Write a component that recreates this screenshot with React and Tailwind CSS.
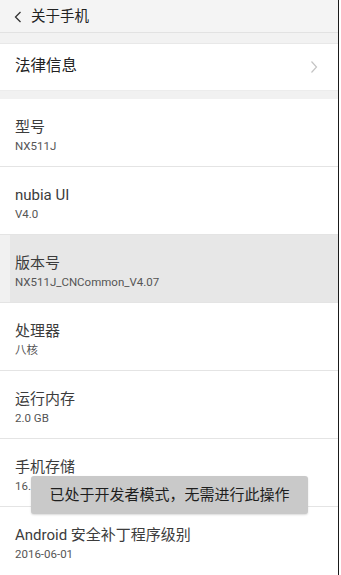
import React from "react";

const font = { fontFamily: 'Roboto, "Noto Sans CJK SC", "Noto Sans", sans-serif' };

function Row({ title, value, highlight, last }) {
  return (
    <div className={`relative h-[68.5px] ${last ? "" : "border-b border-[#e4e4e4]"} ${highlight ? "bg-[#e7e7e7]" : "bg-white"}`}>
      {highlight && <div className="absolute left-0 top-0 bottom-0 w-[10px] bg-[#f1f1f1]" />}
      <div className="relative pl-[15px] pt-[18px]">
        <div className="text-[15px] leading-[20px] text-[#3c3c3c]">{title}</div>
        <div className="mt-[2px] text-[11.5px] leading-[14px] text-[#555]">{value}</div>
      </div>
    </div>
  );
}

export default function App() {
  return (
    <div className="flex w-[341px] h-[575px] overflow-hidden bg-white" style={font}>
      <div className="relative w-[338px] h-full flex flex-col">
        <div className="h-[32px] bg-[#f4f4f4] flex items-center pl-[14px] pt-[2px]">
          <svg width="8" height="12" viewBox="0 0 8 12" className="mr-[9px]">
            <path d="M6.5 1 L1.5 6 L6.5 11" fill="none" stroke="#333" strokeWidth="1.3" />
          </svg>
          <span className="text-[14.5px] text-[#222] leading-none">关于手机</span>
        </div>
        <div className="h-[12px] bg-[#f2f2f2] border-t border-[#e2e2e2] border-b border-b-[#e8e8e8]" />
        <div className="h-[47px] bg-white flex items-center justify-between pl-[15px] pr-[20px]">
          <span className="text-[15.5px] text-[#222]">法律信息</span>
          <svg width="8" height="14" viewBox="0 0 8 14">
            <path d="M1.5 1.5 L6.5 7 L1.5 12.5" fill="none" stroke="#c4c4c4" strokeWidth="1.2" />
          </svg>
        </div>
        <div className="h-[9px] bg-[#f1f1f1] border-t border-[#ececec]" />
        <Row title="型号" value="NX511J" />
        <Row title="nubia UI" value="V4.0" />
        <Row title="版本号" value="NX511J_CNCommon_V4.07" highlight />
        <Row title="处理器" value="八核" />
        <Row title="运行内存" value="2.0 GB" />
        <Row title="手机存储" value="16.0 GB" />
        <Row title="Android 安全补丁程序级别" value="2016-06-01" last />
        <div className="absolute left-[31px] top-[476px] w-[277px] h-[38px] rounded-[3px] bg-[#c9c9c9] flex items-center justify-center shadow-[0_1px_2px_rgba(0,0,0,0.15)]">
          <span className="text-[15px] text-[#1e1e1e]">已处于开发者模式，无需进行此操作</span>
        </div>
      </div>
      <div className="w-[1px] h-full bg-[#1a1a1a]" />
      <div className="w-[2px] h-full bg-white" />
    </div>
  );
}
